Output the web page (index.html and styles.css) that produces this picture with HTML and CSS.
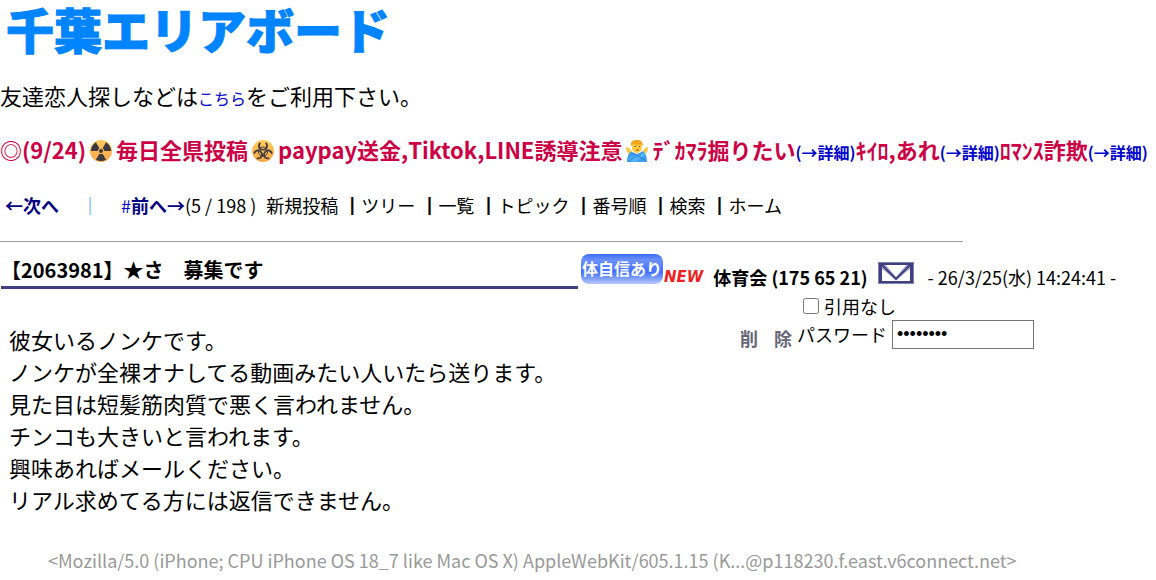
FILE: index.html
```html
<!DOCTYPE html>
<html lang="ja">
<head>
    <meta charset="UTF-8">
    <meta name="viewport" content="width=device-width, initial-scale=1.0">
    <title>千葉エリアボード</title>
    <link rel="stylesheet" href="styles.css">
</head>
<body>
    <h1 class="logo">千葉エリアボード</h1>

    <p class="guide">友達恋人探しなどは<a class="small" href="#">こちら</a>をご利用下さい。</p>

    <p class="notice">◎(9/24)<svg class="emoji" width="22" height="22" viewBox="0 0 22 22">
            <defs>
                <linearGradient id="orange" x1="0" y1="0" x2="0" y2="1">
                    <stop offset="0" stop-color="#ffcc5c"/>
                    <stop offset="1" stop-color="#ffa64a"/>
                </linearGradient>
            </defs>
            <circle cx="11" cy="11" r="11" fill="url(#orange)"/>
            <g fill="#3c3a40">
                <circle cx="11" cy="11" r="2"/>
                <path id="blade" d="M9.4 8.2L5.9 2.2Q11 -0.4 16.1 2.2L12.6 8.2Q11 7.4 9.4 8.2z" transform="rotate(60 11 11)"/>
                <use href="#blade" transform="rotate(120 11 11)"/>
                <use href="#blade" transform="rotate(240 11 11)"/>
            </g>
        </svg>毎日全県投稿<svg class="emoji" width="22" height="22" viewBox="0 0 22 22">
            <circle cx="11" cy="11" r="11" fill="url(#orange)"/>
            <g fill="none" stroke="#3c3a40" stroke-width="1.7">
                <path id="horn" d="M8.2 2.8C5.4 6.4 7.6 9.8 11 9.8S16.6 6.4 13.8 2.8"/>
                <use href="#horn" transform="rotate(120 11 11.6)"/>
                <use href="#horn" transform="rotate(240 11 11.6)"/>
                <circle cx="11" cy="11.6" r="4.6" stroke-width="1"/>
            </g>
            <circle cx="11" cy="11.6" r="1.1" fill="#ffbc54"/>
        </svg>paypay送金,Tiktok,LINE誘導注意<svg class="emoji" width="22" height="22" viewBox="0 0 22 22">
            <path d="M0 7l3 1 3 4-2 3C1 13 0 10 0 7zM22 7l-3 1-3 4 2 3c3-2 4-5 4-8z" fill="#ffc83d"/>
            <path d="M6 5C6 1 8 0 11 0s6 2 5 6c0 4-2 7-5 7S5 10 6 5z" fill="#ffc83d"/>
            <path d="M5 6C4 2 7 0 11 0c4 0 6 2 6 6l-2-2c-3 1-6 1-8 0z" fill="#f2a51d"/>
            <path d="M8.500 6.500h1.500M12.500 6.500h1.500M10 10h3" stroke="#8a5a20"/>
            <path d="M1 22c0-4 1-9 4-10l6 2 6-2c3 1 4 6 4 10z" fill="#3f9ff5"/>
            <path d="M1 20L17 11l3 4-11 7z" fill="#55b4ff"/>
            <path d="M5 12l14 8M3 21l14-9" fill="none" stroke="#2a7ed8"/>
        </svg>ﾃﾞｶﾏﾗ掘りたい<a class="small" href="#">(→詳細)</a>ｷｲﾛ,あれ<a class="small" href="#">(→詳細)</a>ﾛﾏﾝｽ詐欺<a class="small" href="#">(→詳細)</a></p>

    <div class="nav">
        <a class="page" href="#">←次へ</a>
        <span class="divider">｜</span>
        <div class="prev"><a class="hash" href="#">#</a><a class="page" href="#">前へ→</a>(5 / 198 )</div>
        <div class="menu"><a href="#">新規投稿</a> <b>┃</b><a href="#">ツリー</a> <b>┃</b><a href="#">一覧</a> <b>┃</b><a href="#">トピック</a> <b>┃</b><a href="#">番号順</a> <b>┃</b><a href="#">検索</a> <b>┃</b><a href="#">ホーム</a></div>
    </div>

    <hr class="line">

    <div class="post">
        <div class="post-main">
            <h2 class="title">【2063981】★さ　募集です</h2>
            <p class="message">彼女いるノンケです。<br>
                ノンケが全裸オナしてる動画みたい人いたら送ります。<br>
                見た目は短髪筋肉質で悪く言われません。<br>
                チンコも大きいと言われます。<br>
                興味あればメールください。<br>
                リアル求めてる方には返信できません。</p>
        </div>
        <form class="post-side">
            <div class="author">
                <span class="badge">体自信あり</span>
                <span class="new">NEW</span>
                <b class="name">体育会 (175 65 21)</b>
                <a class="mail" href="#" aria-label="メール">
                    <svg width="36" height="22" viewBox="0 0 36 22">
                        <rect x="0.5" y="0.5" width="35" height="21" fill="#404080" stroke="#8080b0"/>
                        <rect x="4" y="3" width="28" height="16" fill="#fff"/>
                        <path d="M4 3h4l10 12L28 3h4v4L18 18 4 7z" fill="#a8a8cc"/>
                        <path d="M8 3h20L18 14z" fill="#fff"/>
                        <path d="M4 3l14 14L32 3" fill="none" stroke="#404080" stroke-width="2"/>
                    </svg>
                </a>
                <span class="date">- 26/3/25(水) 14:24:41 -</span>
            </div>
            <div class="quote">
                <input type="checkbox" id="noquote"><label for="noquote">引用なし</label>
            </div>
            <div class="delete">
                <button class="delete-button" type="button"><span>削</span><span>除</span></button>
                <label for="password">パスワード</label>
                <input type="password" id="password" value="password">
            </div>
        </form>
    </div>

    <p class="agent">&lt;Mozilla/5.0 (iPhone; CPU iPhone OS 18_7 like Mac OS X) AppleWebKit/605.1.15 (K...@p118230.f.east.v6connect.net&gt;</p>
</body>
</html>
```
FILE: styles.css
```css
body {
    font-family: "Noto Sans CJK JP", sans-serif;
    font-size: 22px;
    line-height: 32px;
    margin: 0;
    background: #fff;
    color: #000;
}
a {
    color: #0000cc;
    text-decoration: none;
}
.small {
    font-size: 16px;
}
.logo {
    margin: 0;
    padding-left: 6px;
    font-size: 48px;
    font-weight: 900;
    line-height: 56px;
    color: #0084ff;
    -webkit-text-stroke: 1px #0084ff;
}
.guide {
    margin: 23px 0 19px;
}
.notice {
    margin: 0 0 21px;
    font-weight: bold;
    color: #cc0044;
    white-space: nowrap;
}
.emoji {
    margin: 0 4px;
    vertical-align: -3px;
}
.nav {
    display: flex;
    align-items: center;
    padding-left: 5px;
    font-size: 18px;
    white-space: nowrap;
}
.page {
    font-weight: bold;
    color: #000080;
}
.divider {
    margin: 0 22px;
    color: #3399ee;
}
.menu {
    margin-left: 10px;
}
.menu a {
    color: #000;
}
.menu b {
    margin-left: 1px;
}
.line {
    width: 83.3%;
    height: 1px;
    margin: 20px 0 12px;
    border: 0;
    background: #999;
}
.post {
    display: flex;
}
.post-main {
    width: 50%;
    padding-left: 1px;
    box-sizing: border-box;
}
.title {
    margin: 0;
    font-size: 20px;
    border-bottom: 3px solid #404080;
}
.message {
    margin: 34px 0 0 8px;
}
.post-side {
    width: 50%;
    padding-left: 3px;
    box-sizing: border-box;
    font-size: 18px;
    line-height: 28px;
    white-space: nowrap;
}
.author {
    display: flex;
    height: 38px;
}
.badge {
    width: 82px;
    height: 30px;
    border-radius: 8px;
    background: linear-gradient(#3c6cf0, #6c90ff 20%, #4070ff 60%, #7c9cff 80%, #b8c8ff);
    color: #fff;
    font-size: 16px;
    font-weight: bold;
    text-align: center;
}
.new {
    margin: 9px 10px 0 1px;
    font-family: "DejaVu Sans", sans-serif;
    font-size: 15px;
    font-weight: bold;
    font-style: italic;
    color: #ee2222;
}
.name,
.date {
    margin-top: 9px;
}
.mail {
    margin: 8px 14px 0 10px;
    line-height: 0;
}
.quote {
    display: flex;
    align-items: center;
    padding-left: 222px;
}
.quote input {
    width: 16px;
    height: 16px;
    margin: 0 5px 0 0;
}
.delete {
    display: flex;
    padding-left: 159px;
}
.delete-button {
    display: flex;
    gap: 16px;
    margin: 4px 5px 0 0;
    padding: 0;
    border: 0;
    background: none;
    font: bold 18px/28px "Noto Sans CJK JP", sans-serif;
    color: #666677;
}
.delete input {
    width: 142px;
    height: 29px;
    margin-left: 5px;
    padding: 1px 4px;
    box-sizing: border-box;
    border: 1px solid #767676;
    font-size: 18px;
}
.agent {
    margin: 29px 0 0 48px;
    font-size: 18px;
    color: #999;
}
```
